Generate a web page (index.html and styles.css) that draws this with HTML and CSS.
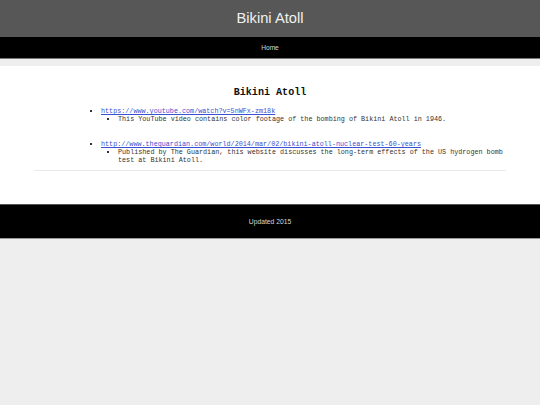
FILE: index.html
```html
<!DOCTYPE html>
<html>
<head>
<meta charset="utf-8">
<link rel="stylesheet" href="styles.css">
</head>
<body>
<header class="site-header">
  <h1 class="site-title">Bikini Atoll</h1>
</header>
<nav class="site-nav"><a href="#" class="nav-link">Home</a></nav>
<main class="content">
  <h2 class="page-title">Bikini Atoll</h2>
  <ul class="links">
    <li class="link-item">
      <a href="#">https://www.youtube.com/watch?v=5nWFx-zm18k</a>
      <ul class="desc">
        <li>This YouTube video contains color footage of the bombing of Bikini Atoll in 1946.</li>
      </ul>
    </li>
    <li class="link-item">
      <a href="#">http://www.theguardian.com/world/2014/mar/02/bikini-atoll-nuclear-test-60-years</a>
      <ul class="desc">
        <li>Published by The Guardian, this website discusses the long-term effects of the US hydrogen bomb test at Bikini Atoll.</li>
      </ul>
    </li>
  </ul>
  <hr class="rule">
</main>
<footer class="site-footer">Updated 2015</footer>
</body>
</html>
```
FILE: styles.css
```css
html, body {
  margin: 0;
  padding: 0;
  background: #eeeeee;
}
body {
  font-family: "Liberation Sans", Arial, sans-serif;
}
.site-header {
  background: #575757;
  height: 37px;
  display: flex;
  align-items: center;
  justify-content: center;
}
.site-title {
  margin: 0;
  font-weight: normal;
  font-size: 14.7px;
  color: #f0f0f0;
  line-height: 1;
}
.site-nav {
  background: #000;
  height: 21px;
  border-bottom: 1px solid #777;
  display: flex;
  align-items: center;
  justify-content: center;
}
.nav-link {
  color: #d8d8d8;
  text-decoration: none;
  font-size: 6.6px;
}
.content {
  margin-top: 7px;
  background: #fff;
  padding: 21px 34px 33px;
  font-family: "Liberation Mono", "Courier New", monospace;
  color: #333;
}
.page-title {
  margin: 0 0 8px;
  text-align: center;
  font-size: 10.1px;
  line-height: 12px;
  color: #111;
}
.links {
  margin: 0;
  padding-left: 67px;
  padding-right: 2px;
  font-size: 6.75px;
  line-height: 8px;
  list-style: square;
}
.link-item {
  margin-bottom: 17px;
}
.link-item:last-child {
  margin-bottom: 6px;
}
.links a {
  color: #3b4fd0;
}
.desc {
  margin: 0;
  padding-left: 17px;
  list-style: square;
}
.rule {
  margin: 0;
  border: 0;
  border-top: 1px solid #eaeaea;
}
.site-footer {
  background: #000;
  border-top: 1px solid #555;
  border-bottom: 1px solid #999;
  height: 33px;
  display: flex;
  align-items: center;
  justify-content: center;
  color: #d8d8d8;
  font-size: 6.75px;
}
```
